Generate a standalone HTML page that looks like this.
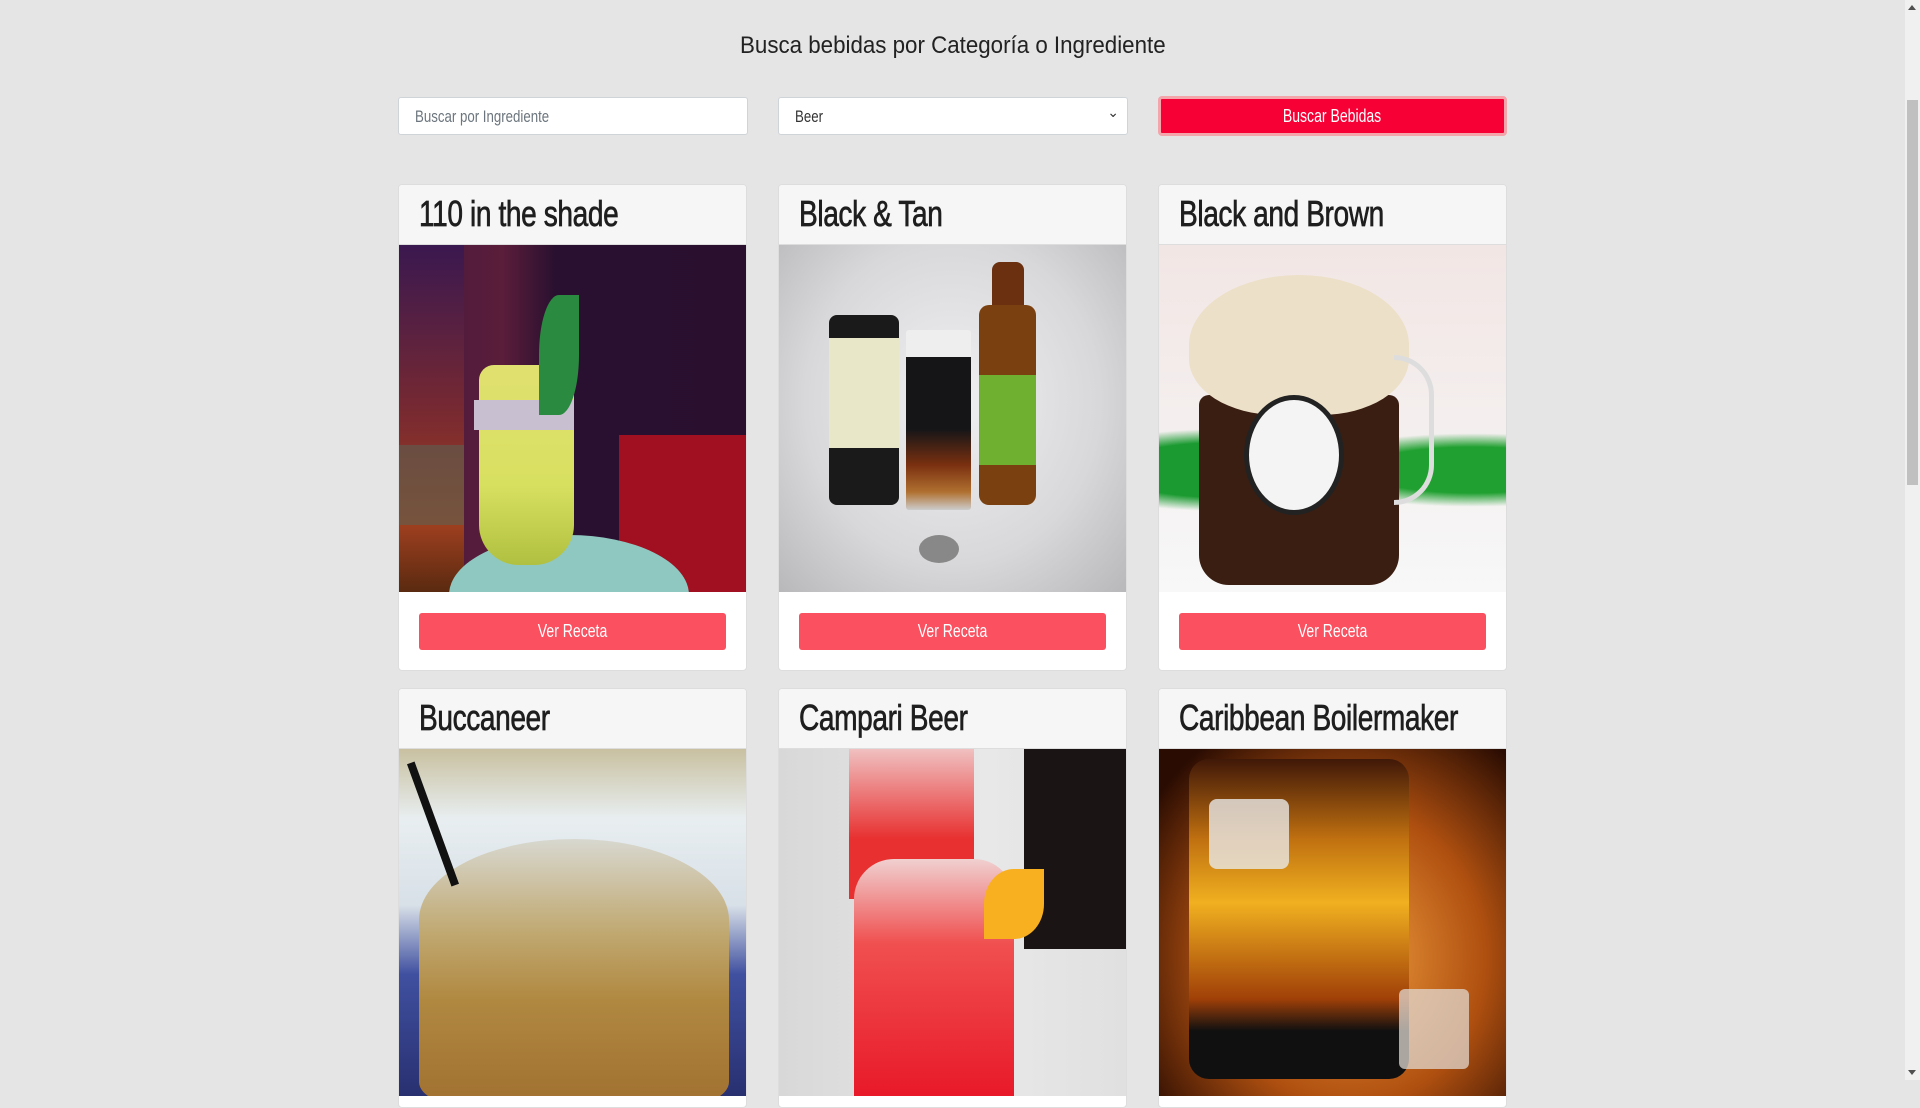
<!DOCTYPE html>
<html><head><meta charset="utf-8"><style>
*{box-sizing:border-box;margin:0;padding:0}
html,body{width:1920px;height:1080px;overflow:hidden;background:#e5e5e5;font-family:"Liberation Sans",sans-serif}
.t{position:absolute;left:0;width:1905px;top:32px;text-align:center;font-size:24px;color:#222}
.t span{display:inline-block;transform:scaleX(0.93)}
.n{display:inline-block;transform:scaleX(0.78);transform-origin:left center;white-space:nowrap}
.nc{display:inline-block;transform:scaleX(0.78);transform-origin:center center;white-space:nowrap}
.in{position:absolute;top:97px;height:38px;background:#fff;border:1px solid #cfd4d9;border-radius:3px;font-size:17px;color:#6c757d;padding:9px 16px}
.btn{position:absolute;top:96px;left:1158px;width:349px;height:40px;background:#f70035;border:3px solid #f4a4ab;border-radius:4px;color:#fff;text-align:center;line-height:34px;font-size:18px}
.card{position:absolute;width:349px;background:#fff;border:1px solid #ddd;border-radius:4px;overflow:hidden}
.card h2{height:60px;background:#f6f6f6;border-bottom:1px solid #ddd;font-weight:normal;font-size:36px;color:#1e1e1e;padding:8px 0 0 20px;letter-spacing:-0.5px;-webkit-text-stroke:0.7px #1e1e1e}
.img{height:347px;position:relative;overflow:hidden}
.vr{position:absolute;left:20px;right:20px;top:428px;height:37px;background:#fa5060;border-radius:3px;color:#fff;text-align:center;line-height:37px;font-size:18px}
.sb{position:absolute;right:0;top:0;width:15px;height:1080px;background:#f0f0f0}
.th{position:absolute;right:2px;top:100px;width:11px;height:385px;background:#c0c0c0}
.a{position:absolute;left:3px;width:0;height:0;border-left:4px solid transparent;border-right:4px solid transparent}
.o{position:absolute}
</style></head><body>
<div class="t"><span>Busca bebidas por Categoría o Ingrediente</span></div>
<div class="in" style="left:398px;width:350px"><span class="n">Buscar por Ingrediente</span></div>
<div class="in" style="left:778px;width:350px;color:#333"><span class="n">Beer</span><span style="position:absolute;right:8px;top:6px;font-size:14px">&#8964;</span></div>
<div class="btn"><span class="nc">Buscar Bebidas</span></div>

<div class="card" style="left:398px;top:184px;height:487px"><h2><span class="n">110 in the shade</span></h2>
<div class="img" style="background:linear-gradient(90deg,#4a1a40 0%,#5a1d3a 30%,#2a1030 45%,#2a0f2f 100%)">
<div class="o" style="left:0;top:0;width:65px;height:347px;background:linear-gradient(#3a1850,#7a2a30 50%,#a04020 80%,#5a2a10)"></div>
<div class="o" style="left:0;top:200px;width:65px;height:80px;background:#5a6050;opacity:.6"></div>
<div class="o" style="left:220px;top:190px;width:130px;height:157px;background:#a01020"></div>
<div class="o" style="left:50px;top:290px;width:240px;height:120px;border-radius:50%;background:#8fc8c0"></div>
<div class="o" style="left:80px;top:120px;width:95px;height:200px;border-radius:15px 15px 40px 40px;background:linear-gradient(#e0e070,#d8e060 60%,#b0c040)"></div>
<div class="o" style="left:75px;top:155px;width:100px;height:30px;background:#c8c0d0"></div>
<div class="o" style="left:140px;top:50px;width:40px;height:120px;background:#2a8a40;border-radius:50% 0"></div>
</div><div class="vr"><span class="nc">Ver Receta</span></div></div>

<div class="card" style="left:778px;top:184px;height:487px"><h2><span class="n">Black &amp; Tan</span></h2>
<div class="img" style="background:radial-gradient(ellipse at 50% 45%,#f0f0f2,#d8d8da 60%,#b8b8ba)">
<div class="o" style="left:50px;top:70px;width:70px;height:190px;border-radius:8px;background:linear-gradient(#1a1a1a 0 12%,#e8e8c8 12% 70%,#1a1a1a 70%)"></div>
<div class="o" style="left:127px;top:85px;width:65px;height:180px;border-radius:3px;background:linear-gradient(#eee 0 15%,#151518 15% 55%,#7a3010 75%,#b07030 90%,#ccc)"></div>
<div class="o" style="left:213px;top:17px;width:32px;height:50px;background:#6a3010;border-radius:8px 8px 0 0"></div>
<div class="o" style="left:200px;top:60px;width:57px;height:200px;border-radius:10px;background:linear-gradient(#7a4010 0 35%,#70b030 35% 80%,#7a4010 80%)"></div>
<div class="o" style="left:140px;top:290px;width:40px;height:28px;border-radius:50%;background:#888"></div>
</div><div class="vr"><span class="nc">Ver Receta</span></div></div>

<div class="card" style="left:1158px;top:184px;height:487px"><h2><span class="n">Black and Brown</span></h2>
<div class="img" style="background:linear-gradient(#f2e6e4,#f4f0f0 60%,#f8f8f8)">
<div class="o" style="left:0;top:160px;width:349px;height:130px;background:radial-gradient(ellipse at 20% 50%,#1a9a30 0 30%,transparent 45%),radial-gradient(ellipse at 90% 50%,#20a030 0 25%,transparent 40%)"></div>
<div class="o" style="left:40px;top:150px;width:200px;height:190px;border-radius:10px 10px 30px 30px;background:#3a1e12"></div>
<div class="o" style="left:30px;top:30px;width:220px;height:140px;border-radius:50% 50% 40% 40%;background:#ede0c8"></div>
<div class="o" style="left:85px;top:150px;width:100px;height:120px;border-radius:50%;background:#f4f4f4;border:5px solid #222"></div>
<div class="o" style="left:235px;top:110px;width:40px;height:150px;border-radius:0 40px 40px 0;border:5px solid #ddd;border-left:0"></div>
</div><div class="vr"><span class="nc">Ver Receta</span></div></div>

<div class="card" style="left:398px;top:688px;height:420px"><h2><span class="n">Buccaneer</span></h2>
<div class="img" style="background:linear-gradient(#c8c0a0,#e8eef0 20%,#d8e0e8 45%,#4050a0 65%,#283070)">
<div class="o" style="left:20px;top:90px;width:310px;height:270px;border-radius:50% 50% 20% 20%/30% 30% 10% 10%;background:linear-gradient(#d8d8d0,#c0a870 35%,#b08840 60%,#a07030)"></div>
<div class="o" style="left:30px;top:10px;width:8px;height:130px;background:#111;transform:rotate(-20deg)"></div>
</div></div>

<div class="card" style="left:778px;top:688px;height:420px"><h2><span class="n">Campari Beer</span></h2>
<div class="img" style="background:linear-gradient(90deg,#d8d8d8,#e8e8e8 60%,#e0e0e0)">
<div class="o" style="left:245px;top:0;width:104px;height:200px;background:#1a1414"></div>
<div class="o" style="left:70px;top:0;width:125px;height:150px;background:linear-gradient(#f0c0c0,#e83030 60%)"></div>
<div class="o" style="left:75px;top:110px;width:160px;height:240px;border-radius:40px 40px 0 0;background:linear-gradient(#f0d0d0,#f05050 35%,#e81828)"></div>
<div class="o" style="left:205px;top:120px;width:60px;height:70px;background:#f8b020;border-radius:50% 0 50% 0"></div>
</div></div>

<div class="card" style="left:1158px;top:688px;height:420px"><h2><span class="n">Caribbean Boilermaker</span></h2>
<div class="img" style="background:radial-gradient(ellipse at 55% 60%,#f0a040,#b05010 50%,#2a0c02 90%)">
<div class="o" style="left:30px;top:10px;width:220px;height:320px;border-radius:20px;background:linear-gradient(#401808,#c07010 25%,#f0b020 45%,#a04008 75%,#101010 85%)"></div>
<div class="o" style="left:50px;top:50px;width:80px;height:70px;background:#e8e8e8;opacity:.8;border-radius:8px"></div>
<div class="o" style="left:240px;top:240px;width:70px;height:80px;background:#e0d8d0;opacity:.75;border-radius:6px"></div>
</div></div>

<div class="sb"><div class="a" style="top:5px;border-bottom:5px solid #505050"></div><div class="th"></div><div class="a" style="bottom:5px;border-top:5px solid #505050"></div></div>
</body></html>
